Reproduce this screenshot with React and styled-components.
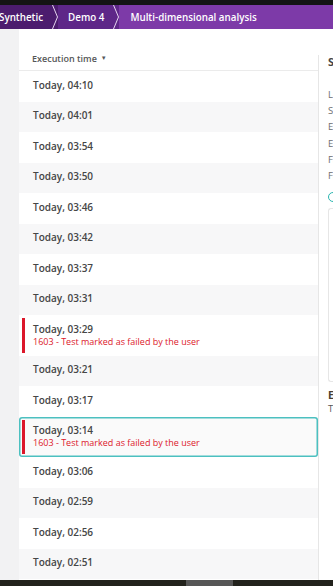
import React from "react";
import styled, { createGlobalStyle } from "styled-components";

const GlobalStyle = createGlobalStyle`
  html, body {
    margin: 0;
    padding: 0;
    overflow: hidden;
  }
  body {
    font-family: "Open Sans", "Noto Sans", sans-serif;
  }
`;

const executions = [
  { time: "04:10" },
  { time: "04:01" },
  { time: "03:54" },
  { time: "03:50" },
  { time: "03:46" },
  { time: "03:42" },
  { time: "03:37" },
  { time: "03:31" },
  { time: "03:29", error: "1603 - Test marked as failed by the user" },
  { time: "03:21" },
  { time: "03:17" },
  { time: "03:14", error: "1603 - Test marked as failed by the user", selected: true },
  { time: "03:06" },
  { time: "02:59" },
  { time: "02:56" },
  { time: "02:51" },
];

const detailLines = [
  "Location",
  "Status",
  "Executed at",
  "Execution time",
  "Failure code",
  "Failure reason",
];

const Frame = styled.div`
  width: 333px;
  height: 586px;
  display: flex;
  flex-direction: column;
  background: #ffffff;
  overflow: hidden;
`;

const TopStrip = styled.div`
  height: 5px;
  background: #141414;
  flex-shrink: 0;
`;

const Breadcrumbs = styled.nav`
  height: 24px;
  display: flex;
  align-items: stretch;
  background: #7d3aa8;
  flex-shrink: 0;
`;

const Crumb = styled.div`
  display: flex;
  align-items: center;
  gap: 9px;
  padding-left: ${(p) => p.$pad}px;
  background: ${(p) => p.$bg};
  color: #ffffff;
  font-size: 9.8px;
  font-weight: 600;
  white-space: nowrap;
  margin-left: ${(p) => p.$shift || 0}px;
`;

const Chevron = () => (
  <svg width="6" height="24" viewBox="0 0 6 24">
    <path d="M0.5 0 L5.5 12 L0.5 24" fill="none" stroke="#e6d6f0" strokeWidth="1" />
  </svg>
);

const Body = styled.div`
  flex: 1;
  min-height: 0;
  display: flex;
`;

const Gutter = styled.div`
  width: 19px;
  flex-shrink: 0;
  background: #f2f2f3;
`;

const ListPanel = styled.section`
  width: 299px;
  flex-shrink: 0;
  display: flex;
  flex-direction: column;
  background: #ffffff;
`;

const ListHeader = styled.div`
  height: 42px;
  flex-shrink: 0;
  box-sizing: border-box;
  padding: 23px 0 0 13px;
  border-bottom: 1px solid #ebebeb;
  color: #555657;
  font-size: 9px;
  font-weight: 600;
  display: flex;
  align-items: flex-start;
  gap: 4px;
`;

const SortArrow = styled.span`
  font-size: 6px;
  line-height: 13px;
`;

const Row = styled.div`
  display: flex;
  align-items: stretch;
  flex-shrink: 0;
  background: ${(p) => (p.$selected ? "#fafafa" : p.$striped ? "#f7f7f8" : "#ffffff")};
  border-radius: ${(p) => (p.$selected ? "3px" : "0")};
  box-shadow: ${(p) => (p.$selected ? "inset 0 0 0 1.5px #4cc0c0" : "none")};
`;

const Marker = styled.div`
  width: 2.5px;
  margin: 3px 0 3px 3px;
  background: ${(p) => (p.$error ? "#dc172a" : "transparent")};
  flex-shrink: 0;
`;

const RowContent = styled.div`
  padding: 5.5px 0 9px 8.5px;
  display: flex;
  flex-direction: column;
`;

const Time = styled.span`
  font-size: 10px;
  font-weight: 600;
  color: #454646;
  line-height: 16px;
`;

const ErrorText = styled.span`
  font-size: 9px;
  color: #dc172a;
  line-height: 11px;
  margin-top: -1px;
  white-space: nowrap;
`;

const DetailsPanel = styled.aside`
  flex: 1;
  min-width: 0;
  margin-top: 26px;
  border-left: 1px solid #e6e6e6;
  padding: 0 0 0 9px;
  overflow: hidden;
  white-space: nowrap;
`;

const DetailsTitle = styled.h3`
  margin: 0 0 18px;
  font-size: 11px;
  font-weight: 700;
  color: #454646;
  line-height: 14px;
`;

const DetailLine = styled.div`
  font-size: 9.5px;
  color: #6d6e6f;
  line-height: 16.2px;
`;

const StatusIcon = styled.div`
  width: 8px;
  height: 8px;
  margin-top: 8px;
  border-radius: 50%;
  border: 1.5px solid #2ab6b0;
`;

const ChartBox = styled.div`
  margin-top: 6px;
  height: 172px;
  border: 1px solid #e6e6e6;
  border-right: none;
  border-radius: 3px 0 0 3px;
`;

const SectionTitle = styled.h4`
  margin: 6px 0 0;
  font-size: 10.5px;
  font-weight: 700;
  color: #4a3f30;
  line-height: 14px;
`;

const SectionText = styled.div`
  font-size: 9.5px;
  color: #555657;
  line-height: 13px;
`;

const BottomBar = styled.div`
  height: 6px;
  flex-shrink: 0;
  background: #22221c;
  display: flex;
  padding-left: 186px;
`;

const ScrollThumb = styled.div`
  width: 47px;
  background: #565656;
`;

export default function App() {
  return (
    <Frame>
      <GlobalStyle />
      <TopStrip />
      <Breadcrumbs>
        <Crumb $bg="#4c1c6e" $pad={0} $shift={-1}>
          Synthetic
          <Chevron />
        </Crumb>
        <Crumb $bg="#5e2788" $pad={10}>
          Demo 4
          <Chevron />
        </Crumb>
        <Crumb $bg="#7d3aa8" $pad={11}>
          Multi-dimensional analysis
        </Crumb>
      </Breadcrumbs>
      <Body>
        <Gutter />
        <ListPanel>
          <ListHeader>
            Execution time <SortArrow>▼</SortArrow>
          </ListHeader>
          {executions.map((ex, i) => (
            <Row key={ex.time} $striped={i % 2 === 1} $selected={ex.selected}>
              <Marker $error={!!ex.error} />
              <RowContent>
                <Time>Today, {ex.time}</Time>
                {ex.error && <ErrorText>{ex.error}</ErrorText>}
              </RowContent>
            </Row>
          ))}
        </ListPanel>
        <DetailsPanel>
          <DetailsTitle>Summary</DetailsTitle>
          {detailLines.map((line) => (
            <DetailLine key={line}>{line}</DetailLine>
          ))}
          <StatusIcon />
          <ChartBox />
          <SectionTitle>Events</SectionTitle>
          <SectionText>There are no events</SectionText>
        </DetailsPanel>
      </Body>
      <BottomBar>
        <ScrollThumb />
      </BottomBar>
    </Frame>
  );
}
